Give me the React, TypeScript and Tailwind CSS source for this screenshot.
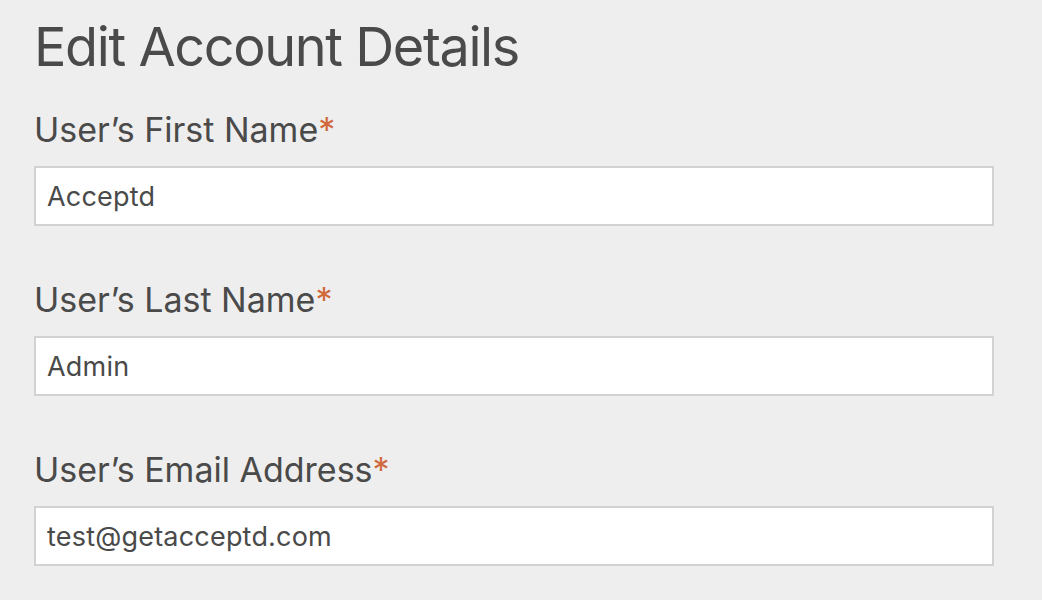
import React from "react";

const fields = [
  { label: "User\u2019s First Name", value: "Acceptd" },
  { label: "User\u2019s Last Name", value: "Admin" },
  { label: "User\u2019s Email Address", value: "test@getacceptd.com" },
];

export default function App() {
  return (
    <div
      className="w-[1042px] h-[600px] overflow-hidden bg-[#eeeeee] text-[#4a4a4a] pl-[34px] pt-[15px]"
      style={{ fontFamily: "Inter, 'Noto Sans', sans-serif" }}
    >
      <h1 className="text-[54px] leading-[64px] font-normal tracking-[-1.4px]">Edit Account Details</h1>
      <div className="mt-[31px] flex flex-col gap-[54px]">
        {fields.map((f) => (
          <div key={f.label} className="flex flex-col gap-[16px]">
            <label className="text-[34px] leading-[40px]">
              {f.label}
              <span className="text-[#d0693b]">*</span>
            </label>
            <input
              readOnly
              value={f.value}
              className="w-[960px] h-[60px] bg-white border-2 border-[#d2d2d2] px-[11px] text-[27px] tracking-[0.2px] text-[#4a4a4a] outline-none"
              style={{ fontFamily: "Inter, 'Noto Sans', sans-serif" }}
            />
          </div>
        ))}
      </div>
    </div>
  );
}
